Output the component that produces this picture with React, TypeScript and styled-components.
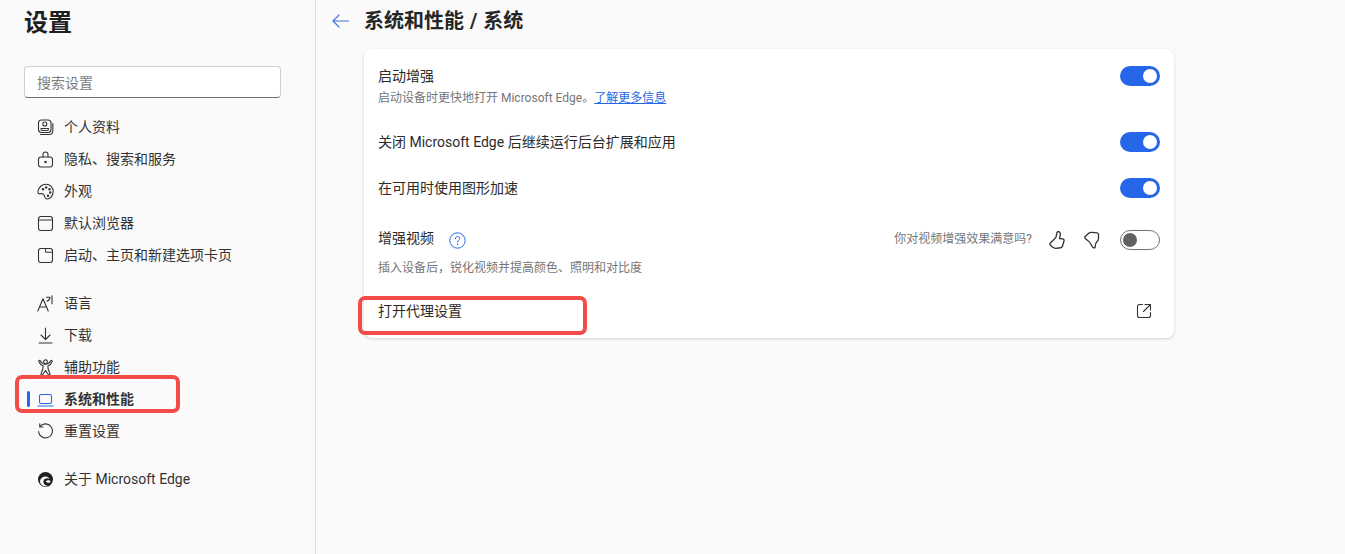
import React from "react";
import styled, { createGlobalStyle } from "styled-components";

const Global = createGlobalStyle`
  html, body { margin: 0; padding: 0; height: 100%; background: #fafafa; overflow: hidden; }
  body { font-family: Roboto, "Noto Sans CJK SC", "Liberation Sans", sans-serif; color: #262626; }
  #root { height: 100%; }
`;

const Page = styled.div`
  position: relative;
  display: flex;
  width: 1345px;
  height: 554px;
  background: #fafafa;
  overflow: hidden;
`;
const Sidebar = styled.aside`
  width: 316px;
  height: 100%;
  flex: none;
  box-sizing: border-box;
  border-right: 1px solid #dcdcdc;
  padding: 8px 0 0 24px;
`;
const AppTitle = styled.h1`
  margin: 0;
  font-size: 24px;
  line-height: 30px;
  font-weight: 700;
  color: #1f1f1f;
`;
const Search = styled.div`
  width: 257px;
  height: 32px;
  margin-top: 28px;
  box-sizing: border-box;
  background: #fff;
  border: 1px solid #cfcfcf;
  border-bottom: 1px solid #6e6e6e;
  border-radius: 4px;
  padding: 1px 12px 0;
  font-size: 14px;
  line-height: 30px;
  color: #7d7d7d;
`;
const Nav = styled.nav`
  margin: 13px 0 0 -24px;
  display: flex;
  flex-direction: column;
`;
const Group = styled.div`
  display: flex;
  flex-direction: column;
  margin-bottom: 16px;
`;
const Item = styled.div<{ $active?: boolean }>`
  position: relative;
  height: 32px;
  display: flex;
  align-items: center;
  padding-left: 37px;
  gap: 10px;
  font-size: 14px;
  font-weight: ${(p) => (p.$active ? 700 : 400)};
  color: #333;
`;
const ItemText = styled.span`
  display: block;
  line-height: 20px;
`;
const ActiveBar = styled.span`
  position: absolute;
  left: 27px;
  top: 8px;
  width: 3px;
  height: 16px;
  border-radius: 2px;
  background: #2567e8;
`;
const IconBox = styled.span<{ $color?: string }>`
  width: 17px;
  height: 17px;
  flex: none;
  color: ${(p) => p.$color ?? "#333"};
  display: block;
  svg { display: block; width: 17px; height: 17px; }
`;
const Main = styled.main`
  flex: 1;
  padding-left: 16px;
`;
const Header = styled.header`
  display: flex;
  align-items: center;
  height: 42px;
  gap: 15px;
`;
const BackIcon = styled.svg`
  width: 17px;
  height: 14px;
  flex: none;
  margin-top: -1px;
`;
const PageTitle = styled.h2`
  margin: 0;
  font-size: 20px;
  font-weight: 700;
  line-height: 26px;
  color: #262626;
  word-spacing: 1px;
`;
const Card = styled.section`
  margin: 7px 0 0 32px;
  width: 810px;
  height: 289px;
  box-sizing: border-box;
  background: #fff;
  border-radius: 8px;
  box-shadow: 0 1px 3px rgba(0, 0, 0, 0.17);
  padding: 0 14px;
`;
const Row = styled.div<{ $h: number; $top?: number; $align?: string }>`
  height: ${(p) => p.$h}px;
  box-sizing: border-box;
  padding-top: ${(p) => p.$top ?? 0}px;
  display: flex;
  align-items: ${(p) => p.$align ?? "center"};
  justify-content: space-between;
`;
const Texts = styled.div`
  display: flex;
  flex-direction: column;
`;
const Label = styled.div`
  font-size: 14px;
  line-height: 20px;
  color: #2b2b2b;
  display: flex;
  align-items: center;
`;
const Sub = styled.div<{ $mt?: number }>`
  font-size: 12px;
  line-height: 18px;
  margin-top: ${(p) => p.$mt ?? 3}px;
  color: #767676;
`;
const Link = styled.a`
  color: #2567e8;
  text-decoration: underline;
`;
const Switch = styled.span<{ $on?: boolean }>`
  position: relative;
  width: 40px;
  height: 20px;
  flex: none;
  box-sizing: border-box;
  border-radius: 10px;
  background: ${(p) => (p.$on ? "#2567e8" : "#fff")};
  border: ${(p) => (p.$on ? "none" : "1px solid #757575")};
  &::after {
    content: "";
    position: absolute;
    top: ${(p) => (p.$on ? 3 : 2)}px;
    ${(p) => (p.$on ? "right: 3px;" : "left: 2px;")}
    width: 14px;
    height: 14px;
    border-radius: 50%;
    background: ${(p) => (p.$on ? "#fff" : "#616161")};
  }
`;
const Controls = styled.div`
  display: flex;
  align-items: center;
  margin-top: 2px;
`;
const Question = styled.span`
  font-size: 12px;
  line-height: 18px;
  color: #767676;
  margin: -2px 16px 0 0;
`;
const Thumb = styled.svg<{ $mr: number }>`
  width: 18px;
  height: 20px;
  margin-right: ${(p) => p.$mr}px;
  color: #333;
  flex: none;
`;
const HelpIcon = styled.svg`
  width: 17px;
  height: 17px;
  align-self: flex-start;
  margin: 4px 0 -1px 15px;
  flex: none;
`;
const ExtIcon = styled.svg`
  width: 16px;
  height: 16px;
  margin-right: 8px;
  flex: none;
`;
const RedBox = styled.div<{ $x: number; $y: number; $w: number; $h: number }>`
  position: absolute;
  left: ${(p) => p.$x}px;
  top: ${(p) => p.$y}px;
  width: ${(p) => p.$w}px;
  height: ${(p) => p.$h}px;
  box-sizing: border-box;
  border: 4px solid #f24c48;
  border-radius: 7px;
  pointer-events: none;
`;

const S = { fill: "none", stroke: "currentColor", strokeWidth: 1.1, strokeLinecap: "round", strokeLinejoin: "round" } as const;
const Ico = ({ children }: { children: React.ReactNode }) => (
  <svg viewBox="0 0 17 17" {...S}>{children}</svg>
);

const Profile = () => (
  <Ico>
    <rect x="1.500" y="1" width="12.500" height="12.500" rx="3" />
    <circle cx="7.800" cy="5" r="2" />
    <path d="M4 9.500h7.500v.8c0 .8-.7 1.200-1.500 1.200H5.500c-.8 0-1.500-.4-1.500-1.200z" />
    <path d="M3.500 15.500h8.500c2 0 3.800-1.500 3.800-3.800V4.500" />
  </Ico>
);
const Lock = () => (
  <Ico>
    <rect x="1.500" y="6" width="14" height="10" rx="2.500" />
    <path d="M6 6V3.500a2.500 2.500 0 0 1 5 0V6" />
    <circle cx="8.500" cy="11" r=".7" fill="currentColor" />
  </Ico>
);
const Palette = () => (
  <Ico>
    <path d="M9 1.200c4.200 0 7.200 3.200 7.200 7.400 0 4.300-3 7.400-6.200 7.400-2.400 0-2.200-2.600-3-4-.8-1.300-2.600-1.600-4-1.200-1.300.3-2.400-.8-2.100-2.300C1.600 4.300 5 1.200 9 1.200z" />
    <circle cx="6" cy="6.200" r=".7" fill="currentColor" />
    <circle cx="9.200" cy="4.400" r=".7" fill="currentColor" />
    <circle cx="12.500" cy="6.200" r=".7" fill="currentColor" />
    <circle cx="13.300" cy="9.600" r=".7" fill="currentColor" />
    <circle cx="11" cy="12.800" r=".7" fill="currentColor" />
  </Ico>
);
const Browser = () => (
  <Ico>
    <rect x="1.500" y="1.500" width="14" height="14" rx="2.500" />
    <path d="M1.500 5h14" />
  </Ico>
);
const Tab = () => (
  <Ico>
    <rect x="1.500" y="1.500" width="14" height="14" rx="2.500" />
    <path d="M8.500 1.500V4.200a1 1 0 0 0 1 1h6" />
  </Ico>
);
const Lang = () => (
  <Ico>
    <path d="M.8 16 6 3.800 11.200 16M2.500 12h7" />
    <path d="M9.500 2.300h3.500c0 2-1.200 3.300-3 4M15 .8v8" />
  </Ico>
);
const Download = () => (
  <Ico>
    <path d="M8.500 1v11M4 8l4.500 4.500L13 8M2 16h13" />
  </Ico>
);
const Access = () => (
  <Ico>
    <circle cx="8.500" cy="2.800" r="1.900" />
    <path d="M1.800 2.500C3 5.500 5 6.500 6 6.800v2.700L4 15c-.2 1 1 1.500 1.600.8l2.900-4.300 2.900 4.300c.6.700 1.800.2 1.600-.8l-2-5.500V6.800c1-.3 3-1.300 4.200-4.300.3-1-.9-1.500-1.400-.7C12.500 4 11 5.300 8.500 5.300S4.500 4 3.200 1.800c-.5-.8-1.700-.3-1.400.7z" />
  </Ico>
);
const Laptop = () => (
  <Ico>
    <rect x="2.500" y="3.500" width="12" height="9" rx="1.500" />
    <path d="M1 15h15" />
  </Ico>
);
const Reset = () => (
  <Ico>
    <path d="M3.200 3.300A7 7 0 1 1 1.500 8.500" />
    <path d="M2.800 .8v3.200H6" />
  </Ico>
);
const Edge = () => (
  <svg viewBox="0 0 17 17">
    <circle cx="8.500" cy="8.500" r="7.500" fill="#1f1f1f" />
    <path d="M3 10c.5-3 3-4.500 5.500-4.500 2 0 3.500 1 4 2.500-2-1.200-5.500-.8-6 2-.5 2.500 1.500 4.800 5 5-4.500 1.500-8.500-1-8.500-5z" fill="#fafafa" />
    <path d="M9 10c1-1 4-1 4.500.5 0 1-1.500 1.500-2.500 1.300-1-.2-2-.8-2-1.800z" fill="#fafafa" />
  </svg>
);

export default function App() {
  return (
    <Page>
      <Global />
      <Sidebar>
        <AppTitle>设置</AppTitle>
        <Search>搜索设置</Search>
        <Nav>
          <Group>
            <Item><IconBox><Profile /></IconBox><ItemText>个人资料</ItemText></Item>
            <Item><IconBox><Lock /></IconBox><ItemText>隐私、搜索和服务</ItemText></Item>
            <Item><IconBox><Palette /></IconBox><ItemText>外观</ItemText></Item>
            <Item><IconBox><Browser /></IconBox><ItemText>默认浏览器</ItemText></Item>
            <Item><IconBox><Tab /></IconBox><ItemText>启动、主页和新建选项卡页</ItemText></Item>
          </Group>
          <Group>
            <Item><IconBox><Lang /></IconBox><ItemText>语言</ItemText></Item>
            <Item><IconBox><Download /></IconBox><ItemText>下载</ItemText></Item>
            <Item><IconBox><Access /></IconBox><ItemText>辅助功能</ItemText></Item>
            <Item $active><ActiveBar /><IconBox $color="#2567e8"><Laptop /></IconBox><ItemText>系统和性能</ItemText></Item>
            <Item><IconBox><Reset /></IconBox><ItemText>重置设置</ItemText></Item>
          </Group>
          <Group>
            <Item><IconBox><Edge /></IconBox><ItemText>关于 Microsoft Edge</ItemText></Item>
          </Group>
        </Nav>
      </Sidebar>
      <Main>
        <Header>
          <BackIcon viewBox="0 0 17 14" fill="none" stroke="#3f74e0" strokeWidth="1.100" strokeLinecap="round" strokeLinejoin="round">
            <path d="M1 7h15.500M7 1 1 7l6 6" />
          </BackIcon>
          <PageTitle>系统和性能 / 系统</PageTitle>
        </Header>
        <Card>
          <Row $h={70} $top={17} $align="flex-start">
            <Texts>
              <Label>启动增强</Label>
              <Sub>启动设备时更快地打开 Microsoft Edge。<Link>了解更多信息</Link></Sub>
            </Texts>
            <Switch $on />
          </Row>
          <Row $h={46}><Label>关闭 Microsoft Edge 后继续运行后台扩展和应用</Label><Switch $on /></Row>
          <Row $h={46}><Label>在可用时使用图形加速</Label><Switch $on /></Row>
          <Row $h={78} $top={17} $align="flex-start">
            <Texts>
              <Label>增强视频<HelpIcon viewBox="0 0 17 17" fill="none">
                <circle cx="8.500" cy="8.500" r="7.700" stroke="#2567e8" strokeWidth="1" />
                <path d="M6.300 6.700c0-1.300 1-2.200 2.200-2.200s2.200.8 2.200 2c0 1.700-2.200 1.700-2.200 3.500" stroke="#2567e8" strokeWidth="1" strokeLinecap="round" />
                <circle cx="8.500" cy="12.300" r=".7" fill="#2567e8" />
              </HelpIcon></Label>
              <Sub $mt={11}>插入设备后，锐化视频并提高颜色、照明和对比度</Sub>
            </Texts>
            <Controls>
              <Question>你对视频增强效果满意吗?</Question>
              <Thumb $mr={18} viewBox="0 0 18 20" fill="none" stroke="currentColor" strokeWidth="1.300" strokeLinejoin="round">
                <path d="M2 13.500C4 11 7 9.500 8 7l1-4.500C9.500 1 12 1.500 12.300 3.500c.2 2-.5 3.800-.8 5l3 .3c1.500.2 1.800 1.200 1.500 2.200l-1.500 5c-.5 1.800-1.500 2-3.500 2l-3.500.3c-2 0-3.500-1.300-5-3-.7-.8-1-1.100-.5-1.800z" />
              </Thumb>
              <Thumb $mr={18} viewBox="0 0 18 20" fill="none" stroke="currentColor" strokeWidth="1.300" strokeLinejoin="round">
                <path d="M1.200 6.500 5 3c.8-.7 1.500-.8 2.500-.7l5.500.5c1 .1 1.500.7 1.500 1.700V9c0 1.300-.8 2-1.800 3-.8.800-1.100 1.600-1.300 3l-.3 2.300c-.1.800-1.800.9-2.400-.1L5.800 12.500c-.4-.7-.9-1.200-1.500-1.500L1.500 8.800c-.7-.6-.8-1.600-.3-2.300z" />
              </Thumb>
              <Switch />
            </Controls>
          </Row>
          <Row $h={44}>
            <Label>打开代理设置</Label>
            <ExtIcon viewBox="0 0 16 16" fill="none" stroke="#333" strokeWidth="1.100" strokeLinecap="round" strokeLinejoin="round">
              <path d="M6.500 1.500H3.500a2 2 0 0 0-2 2v9a2 2 0 0 0 2 2h9a2 2 0 0 0 2-2V9.500M9 1.500h5.500V7M14.500 1.500 7.500 8.500" />
            </ExtIcon>
          </Row>
        </Card>
      </Main>
      <RedBox $x={15} $y={375} $w={165} $h={38} />
      <RedBox $x={358} $y={296} $w={229} $h={39} />
    </Page>
  );
}
